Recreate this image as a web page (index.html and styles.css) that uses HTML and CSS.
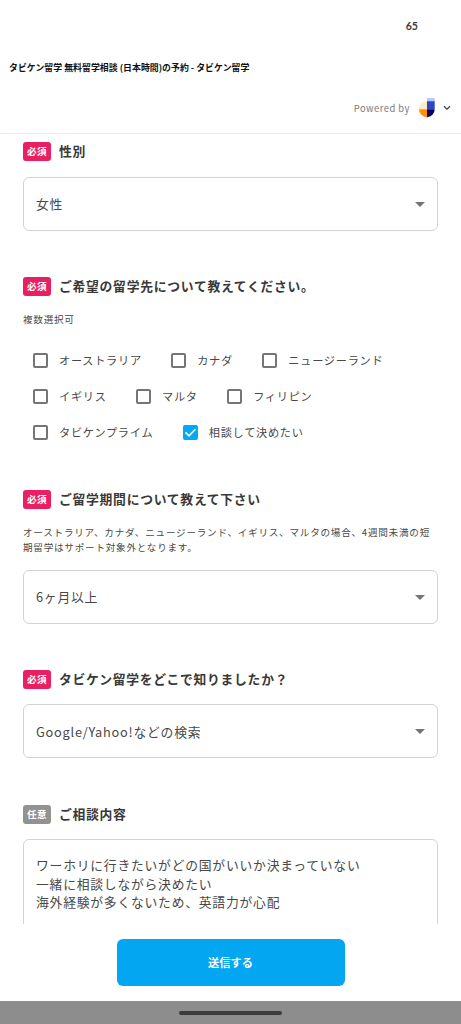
FILE: index.html
```html
<!DOCTYPE html>
<html lang="ja">
<head>
<meta charset="utf-8">
<title>タビケン留学 無料留学相談</title>
<link rel="stylesheet" href="styles.css">
</head>
<body>
<div class="screen">
  <div class="status"><span class="battery">65</span></div>
  <div class="titlebar"><span class="title">タビケン留学 無料留学相談 (日本時間)の予約 - タビケン留学</span></div>
  <header class="powered">
    <span class="powered-text">Powered by</span>
    <svg class="logo" viewBox="0 0 16 20">
      <path d="M8 3.3V11.2H0A8 8 0 0 1 8 3.3Z" fill="#ffe9c8"/>
      <path d="M0 11.2H8V19.2A8 8 0 0 1 0 11.2Z" fill="#ff9100"/>
      <path d="M8 0H15.7V3.2H8Z" fill="#b3c9fa"/>
      <path d="M8 3.2H15.7V11.2H8Z" fill="#2c47c5"/>
      <path d="M8 11.2H15.7A8 8 0 0 1 8 19.2Z" fill="#08005c"/>
    </svg>
    <svg class="chevron" viewBox="0 0 8 6"><path d="M1 1.2L4 4.2L7 1.2" fill="none" stroke="#444" stroke-width="1.3"/></svg>
  </header>
  <main class="form">
    <section class="field gender">
      <h2 class="label"><span class="badge">必須</span><span class="label-text">性別</span></h2>
      <div class="select"><span>女性</span><i class="arrow"></i></div>
    </section>
    <section class="field country">
      <h2 class="label"><span class="badge">必須</span><span class="label-text">ご希望の留学先について教えてください。</span></h2>
      <p class="hint">複数選択可</p>
      <div class="options">
        <div class="row">
          <span class="option"><i class="box"></i>オーストラリア</span>
          <span class="option"><i class="box"></i>カナダ</span>
          <span class="option"><i class="box"></i>ニュージーランド</span>
        </div>
        <div class="row">
          <span class="option"><i class="box"></i>イギリス</span>
          <span class="option"><i class="box"></i>マルタ</span>
          <span class="option"><i class="box"></i>フィリピン</span>
        </div>
        <div class="row">
          <span class="option"><i class="box"></i>タビケンプライム</span>
          <span class="option"><i class="box checked"><svg viewBox="0 0 15 15"><path d="M2.5 7.4L6 10.8L12.5 4.2" fill="none" stroke="#fff" stroke-width="1.6"/></svg></i>相談して決めたい</span>
        </div>
      </div>
    </section>
    <section class="field period">
      <h2 class="label"><span class="badge">必須</span><span class="label-text">ご留学期間について教えて下さい</span></h2>
      <p class="hint">オーストラリア、カナダ、ニュージーランド、イギリス、マルタの場合、4週間未満の短<br>期留学はサポート対象外となります。</p>
      <div class="select"><span>6ヶ月以上</span><i class="arrow"></i></div>
    </section>
    <section class="field source">
      <h2 class="label"><span class="badge">必須</span><span class="label-text">タビケン留学をどこで知りましたか？</span></h2>
      <div class="select"><span>Google/Yahoo!などの検索</span><i class="arrow"></i></div>
    </section>
    <section class="field message">
      <h2 class="label"><span class="badge optional">任意</span><span class="label-text">ご相談内容</span></h2>
      <div class="textarea">ワーホリに行きたいがどの国がいいか決まっていない<br>一緒に相談しながら決めたい<br>海外経験が多くないため、英語力が心配</div>
    </section>
  </main>
  <footer class="actions"><button class="submit">送信する</button></footer>
  <div class="navbar"><span class="pill"></span></div>
</div>
</body>
</html>
```
FILE: styles.css
```css
* { box-sizing: border-box; }
body {
  margin: 0;
  background: #fff;
  color: #484848;
  font-family: "Noto Sans CJK JP", sans-serif;
}
.screen {
  display: flex;
  flex-direction: column;
  height: 1024px;
  overflow: hidden;
}
.status {
  display: flex;
  justify-content: flex-end;
  align-items: center;
  height: 52px;
  padding-right: 43px;
}
.battery {
  font: bold 10.6px/14px Lato, sans-serif;
  color: #3c3c3c;
}
.titlebar {
  display: flex;
  align-items: center;
  height: 31px;
  padding-left: 9px;
}
.title {
  font-size: 8.9px;
  letter-spacing: 0.03px;
  line-height: 14px;
  font-weight: 700;
  color: #111;
  white-space: nowrap;
}
.powered {
  display: flex;
  align-items: center;
  justify-content: flex-end;
  height: 51px;
  padding-right: 10px;
  border-bottom: 1px solid #ececec;
}
.powered-text {
  font-size: 9.4px;
  letter-spacing: 0.5px;
  line-height: 14px;
  color: #7c7c7c;
}
.logo { width: 16px; height: 20px; margin-left: 9px; }
.chevron { width: 8px; height: 6px; margin-left: 8px; }
.form {
  height: 790px;
  padding: 8px 23px 0 23px;
  overflow: hidden;
}
.label {
  display: flex;
  align-items: center;
  gap: 8px;
  height: 19px;
  margin: 0;
}
.badge {
  display: flex;
  align-items: center;
  justify-content: center;
  width: 28px;
  height: 19px;
  padding-bottom: 1px;
  border-radius: 3px;
  background: #e91e63;
  color: #fff;
  font-size: 9.6px;
  font-weight: 700;
  letter-spacing: 0.4px;
}
.optional { background: #929292; }
.label-text {
  padding-bottom: 1px;
  font-size: 12.8px;
  font-weight: 700;
  letter-spacing: 0.73px;
  line-height: 18px;
  color: #383838;
  white-space: nowrap;
}
.select {
  display: flex;
  align-items: center;
  justify-content: space-between;
  height: 54px;
  padding: 0 12px;
  border: 1px solid #d3d3d3;
  border-radius: 6px;
  font-size: 12.8px;
  letter-spacing: 0.75px;
}
.gender .select span { margin-bottom: 1px; }
.arrow {
  border: 5px solid transparent;
  border-top-color: #747474;
  border-bottom: 0;
}
.gender { height: 135px; }
.country { height: 213px; }
.period { height: 180px; }
.source { height: 135px; }
.gender .select { margin-top: 16px; }
.source .select { margin-top: 15px; }
.hint {
  margin: 16px 0 0;
  font-size: 9.6px;
  letter-spacing: 0.75px;
  line-height: 15px;
  white-space: nowrap;
}
.options { margin-top: 15px; padding-left: 10px; }
.row { display: flex; gap: 29.4px; height: 36px; }
.option {
  display: flex;
  align-items: center;
  gap: 11px;
  font-size: 11.2px;
  letter-spacing: 0.72px;
  white-space: nowrap;
}
.box {
  width: 15px;
  height: 15px;
  border: 2px solid #757575;
  border-radius: 2px;
}
.checked { border: 0; background: #03a9f4; }
.checked svg { display: block; width: 15px; height: 15px; }
.period .select { margin-top: 15px; }
.period .select span { margin-bottom: 1px; }
.textarea {
  height: 120px;
  margin-top: 15px;
  padding: 16px 12px;
  border: 1px solid #d3d3d3;
  border-radius: 6px;
  font-size: 12.8px;
  letter-spacing: 0.77px;
  line-height: 18.6px;
  white-space: nowrap;
}
.actions {
  display: flex;
  justify-content: center;
  height: 77px;
  padding-top: 15px;
}
.submit {
  width: 228px;
  height: 47px;
  padding: 0 0 1px;
  border: 0;
  border-radius: 6px;
  background: #03a6f0;
  color: #fff;
  font: 700 11.2px/16px "Noto Sans CJK JP", sans-serif;
}
.navbar {
  display: flex;
  justify-content: center;
  align-items: center;
  height: 23px;
  background: #8d8d8d;
}
.pill {
  width: 103px;
  height: 4px;
  border-radius: 2px;
  background: #3c3c3c;
}
```
